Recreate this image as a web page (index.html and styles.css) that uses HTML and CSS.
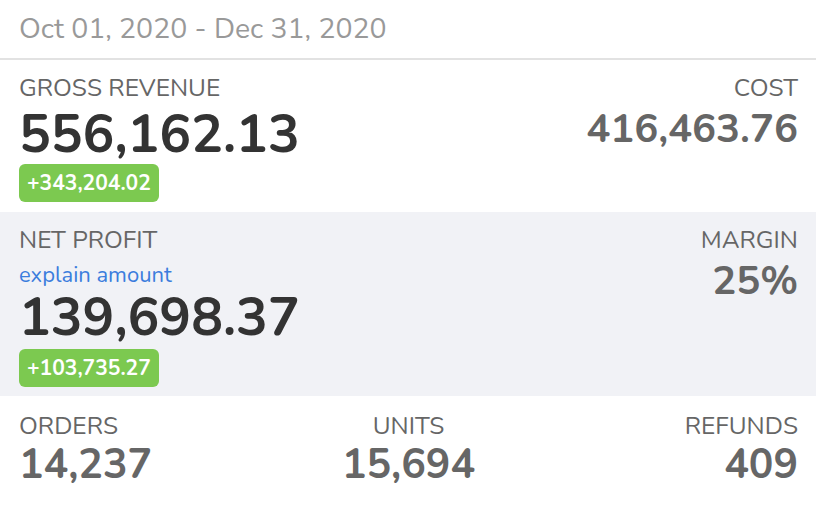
FILE: index.html
```html
<!DOCTYPE html>
<html lang="en">
    <head>
        <meta charset="UTF-8">
        <title>Summary</title>
        <link rel="stylesheet" href="styles.css">
    </head>
    <body>
        <main class="card">
            <div class="period">Oct 01, 2020 - Dec 31, 2020</div>
            <section class="block">
                <div class="col">
                    <div class="label">GROSS REVENUE</div>
                    <div class="value big">556,162.13</div>
                    <span class="delta">+343,204.02</span>
                </div>
                <div class="col right">
                    <div class="label">COST</div>
                    <div class="value mid">416,463.76</div>
                </div>
            </section>
            <section class="block shaded">
                <div class="col">
                    <div class="label">NET PROFIT</div>
                    <a class="explain" href="#">explain amount</a>
                    <div class="value big">139,698.37</div>
                    <span class="delta">+103,735.27</span>
                </div>
                <div class="col right">
                    <div class="label">MARGIN</div>
                    <div class="value mid">25%</div>
                </div>
            </section>
            <section class="stats">
                <div class="col">
                    <div class="label">ORDERS</div>
                    <div class="value small">14,237</div>
                </div>
                <div class="col center">
                    <div class="label">UNITS</div>
                    <div class="value small">15,694</div>
                </div>
                <div class="col right">
                    <div class="label">REFUNDS</div>
                    <div class="value small">409</div>
                </div>
            </section>
        </main>
    </body>
</html>
```

FILE: styles.css
```css
* {
    padding: 0;
    margin: 0;
    box-sizing: border-box
}

body {
    background: #fff;
    font-family: "Nunito", Lato, "Open Sans", sans-serif
}

.card {
    width: 816px
}

.period {
    height: 60px;
    padding: 12px 19px 0;
    font-size: 28.4px;
    line-height: 34px;
    color: #999;
    border-bottom: 2px solid #e2e2e2
}

.block {
    display: flex;
    justify-content: space-between;
    padding: 14px 18px 10px 19px;
    height: 152px
}

.block.shaded {
    background: #f1f2f6;
    height: 184px;
    padding-top: 14px
}

.col {
    display: flex;
    flex-direction: column;
    align-items: flex-start
}

.col.right {
    align-items: flex-end
}

.col.center {
    align-items: center
}

.label {
    font-size: 24.5px;
    line-height: 28px;
    color: #666
}

.value {
    font-weight: 700
}

.big {
    font-size: 53px;
    line-height: 56px;
    color: #333;
    margin-top: 5px
}

.shaded .big {
    margin-top: 0
}

.mid {
    font-size: 40px;
    line-height: 46px;
    color: #666;
    margin-top: 4px
}

.small {
    font-size: 41px;
    line-height: 46px;
    color: #666;
    margin-top: 2px
}

.explain {
    font-size: 22px;
    line-height: 30px;
    color: #3b7ddd;
    text-decoration: none;
    margin-top: 6px
}

.delta {
    display: inline-block;
    margin-top: 1px;
    padding: 0 8px;
    height: 38px;
    line-height: 38px;
    border-radius: 6px;
    background: #7cc950;
    color: #fff;
    font-size: 21px;
    font-weight: 700
}

.shaded .delta {
    margin-top: 3px
}

.stats {
    display: flex;
    justify-content: space-between;
    padding: 16px 18px 0 19px
}

.stats .col {
    width: 33.3%
}
```
